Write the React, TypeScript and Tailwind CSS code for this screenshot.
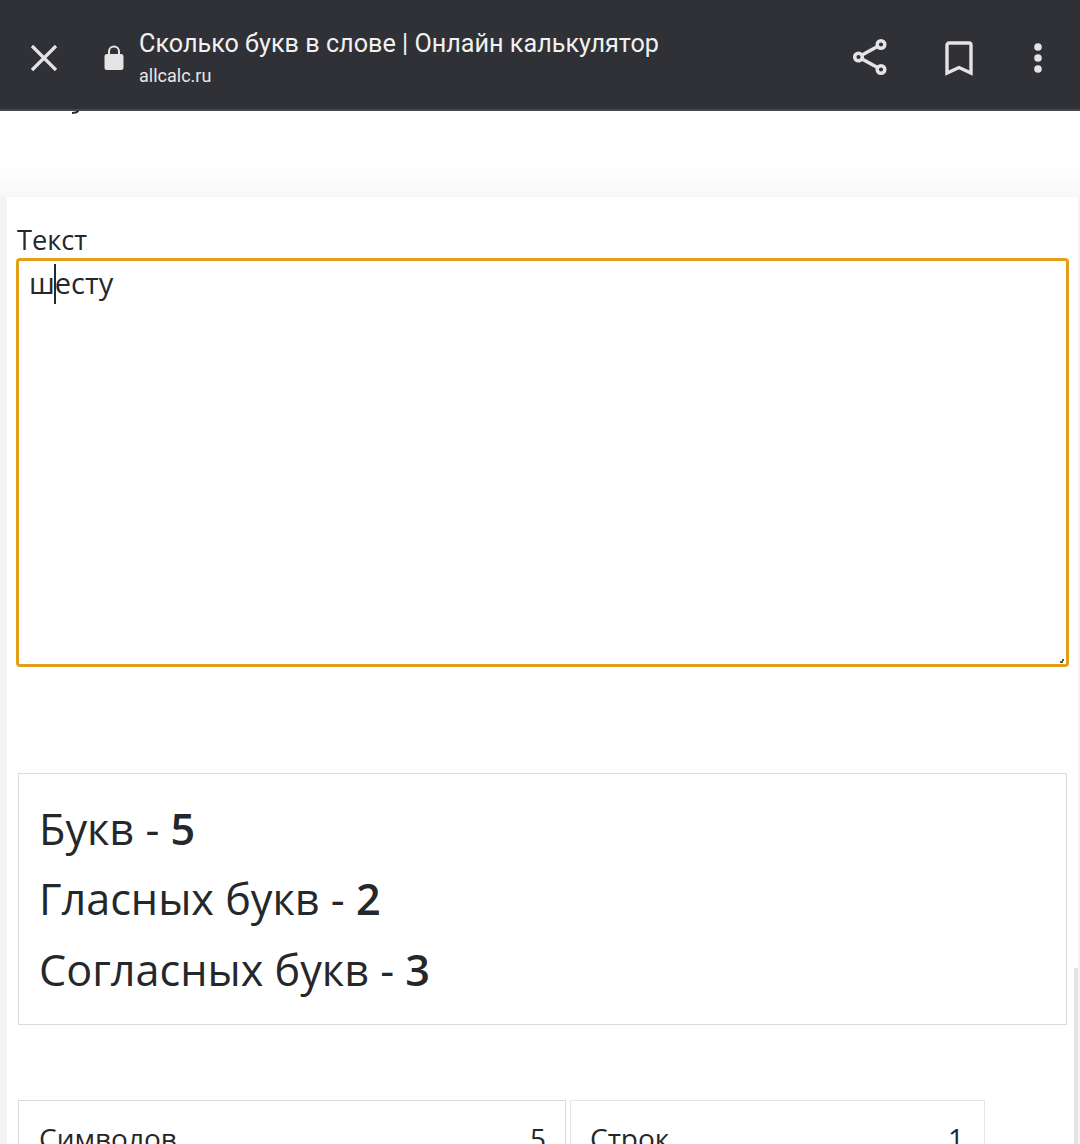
import React from "react";

export default function App() {
  return (
    <div className="relative flex h-[1144px] w-[1080px] flex-col overflow-hidden bg-white text-[#25282b]" style={{ fontFamily: '"Open Sans", sans-serif' }}>
      <header className="z-10 flex h-[111px] shrink-0 items-center border-b-2 border-[#45474a] bg-[#303136] pt-[7px]" style={{ fontFamily: 'Roboto, sans-serif' }}>
        <svg className="ml-[30px] h-[28px] w-[28px]" viewBox="0 0 28 28" fill="none" stroke="#e4e4e4" strokeWidth="3.2">
          <path d="M2 2 L26 26 M26 2 L2 26" />
        </svg>
        <svg className="ml-[46px] h-[26px] w-[20px]" viewBox="0 0 20 26" fill="#e4e4e4">
          <path d="M3 9h14a2.5 2.5 0 0 1 2.5 2.5v11A2.5 2.5 0 0 1 17 25H3a2.5 2.5 0 0 1-2.5-2.5v-11A2.5 2.5 0 0 1 3 9Z" />
          <path d="M5 10V6.5a5 5 0 0 1 10 0V10" fill="none" stroke="#e4e4e4" strokeWidth="2" />
        </svg>
        <div className="ml-[15px] flex w-[600px] flex-col">
          <div className="mt-[-2px] text-[25.2px] leading-[34px] text-[#f1f1f1]">Сколько букв в слове | Онлайн калькулятор</div>
          <div className="mt-[3px] text-[18px] leading-[24px] text-[#e8e8e8]">allcalc.ru</div>
        </div>
        <svg className="ml-[114px] h-[40px] w-[36px]" viewBox="0 0 36 40" fill="none" stroke="#e4e4e4" strokeWidth="3.5">
          <circle cx="5.5" cy="19" r="3.8" />
          <circle cx="28" cy="6.5" r="3.8" />
          <circle cx="28" cy="31.5" r="3.8" />
          <path d="M9 17 L24.5 8.5 M9 21 L24.5 29.5" />
        </svg>
        <svg className="ml-[55px] h-[36px] w-[30px]" viewBox="0 0 30 36" fill="none" stroke="#e4e4e4" strokeWidth="3.4">
          <path d="M3 33V5a2 2 0 0 1 2-2h20a2 2 0 0 1 2 2v28L15 27.5Z" />
        </svg>
        <svg className="ml-[58px] h-[34px] w-[12px]" viewBox="0 0 12 34" fill="#e4e4e4">
          <circle cx="6" cy="6" r="3.8" />
          <circle cx="6" cy="17" r="3.8" />
          <circle cx="6" cy="28" r="3.8" />
        </svg>
      </header>

      <svg className="absolute left-[71px] top-[110px] z-20 h-[4px] w-[9px]" viewBox="0 0 9 4" fill="none" stroke="#2a2a2a" strokeWidth="1.8">
        <path d="M1 3 C4 3 6 2.5 7.5 1" />
      </svg>

      <div className="h-[56px] shrink-0 bg-white" />
      <div className="h-[30px] shrink-0 bg-gradient-to-b from-white to-[#f7f7f7]" />

      <main className="ml-[7px] mr-[2px] flex-1 bg-white pl-[10px] pr-[10px]">
        <label className="mt-[25px] block text-[27.2px] leading-[36px]">Текст</label>
        <div className="relative ml-[-1px] mr-[-1px] h-[409px] rounded-[4px] border-[3px] border-[#e59e17] pl-[10px] pt-[2px] text-[29px] leading-[39px]">
          <span>ш</span>
          <span className="absolute left-[35px] top-[3px] h-[40px] w-[2px] bg-[#1d2a38]" />
          <span>есту</span>
          <svg className="absolute bottom-[1px] right-[1px] h-[5px] w-[5px]" viewBox="0 0 5 5" fill="#555">
            <path d="M0 3h2V1h2v2H3v2H0Z" />
          </svg>
        </div>

        <section className="mx-[1px] mt-[106px] h-[252px] border border-[#dcdcdc] pl-[20px] pt-[20px] text-[43.2px] leading-[70.4px]">
          <div>Букв - <b className="font-semibold">5</b></div>
          <div>Гласных букв - <b className="font-semibold">2</b></div>
          <div>Согласных букв - <b className="font-semibold">3</b></div>
        </section>

        <div className="ml-[1px] mt-[75px] flex gap-[4px] text-[28px] leading-[38px]">
          <div className="flex h-[120px] w-[548px] items-start justify-between border border-[#dcdcdc] pl-[20px] pr-[19px] pt-[18px]">
            <span>Символов</span>
            <span>5</span>
          </div>
          <div className="flex h-[120px] w-[415px] items-start justify-between border border-[#e6e6e6] pl-[19px] pr-[20px] pt-[18px]">
            <span>Строк</span>
            <span>1</span>
          </div>
        </div>
      </main>

      <div className="absolute bottom-0 right-0 h-[176px] w-[6px] bg-[#e4e4e4]" />
      <div className="absolute bottom-0 left-0 top-[197px] w-[7px] bg-[#f4f4f4]" />
      <div className="absolute bottom-0 right-0 top-[197px] w-[2px] bg-[#f4f4f4]" />
    </div>
  );
}
